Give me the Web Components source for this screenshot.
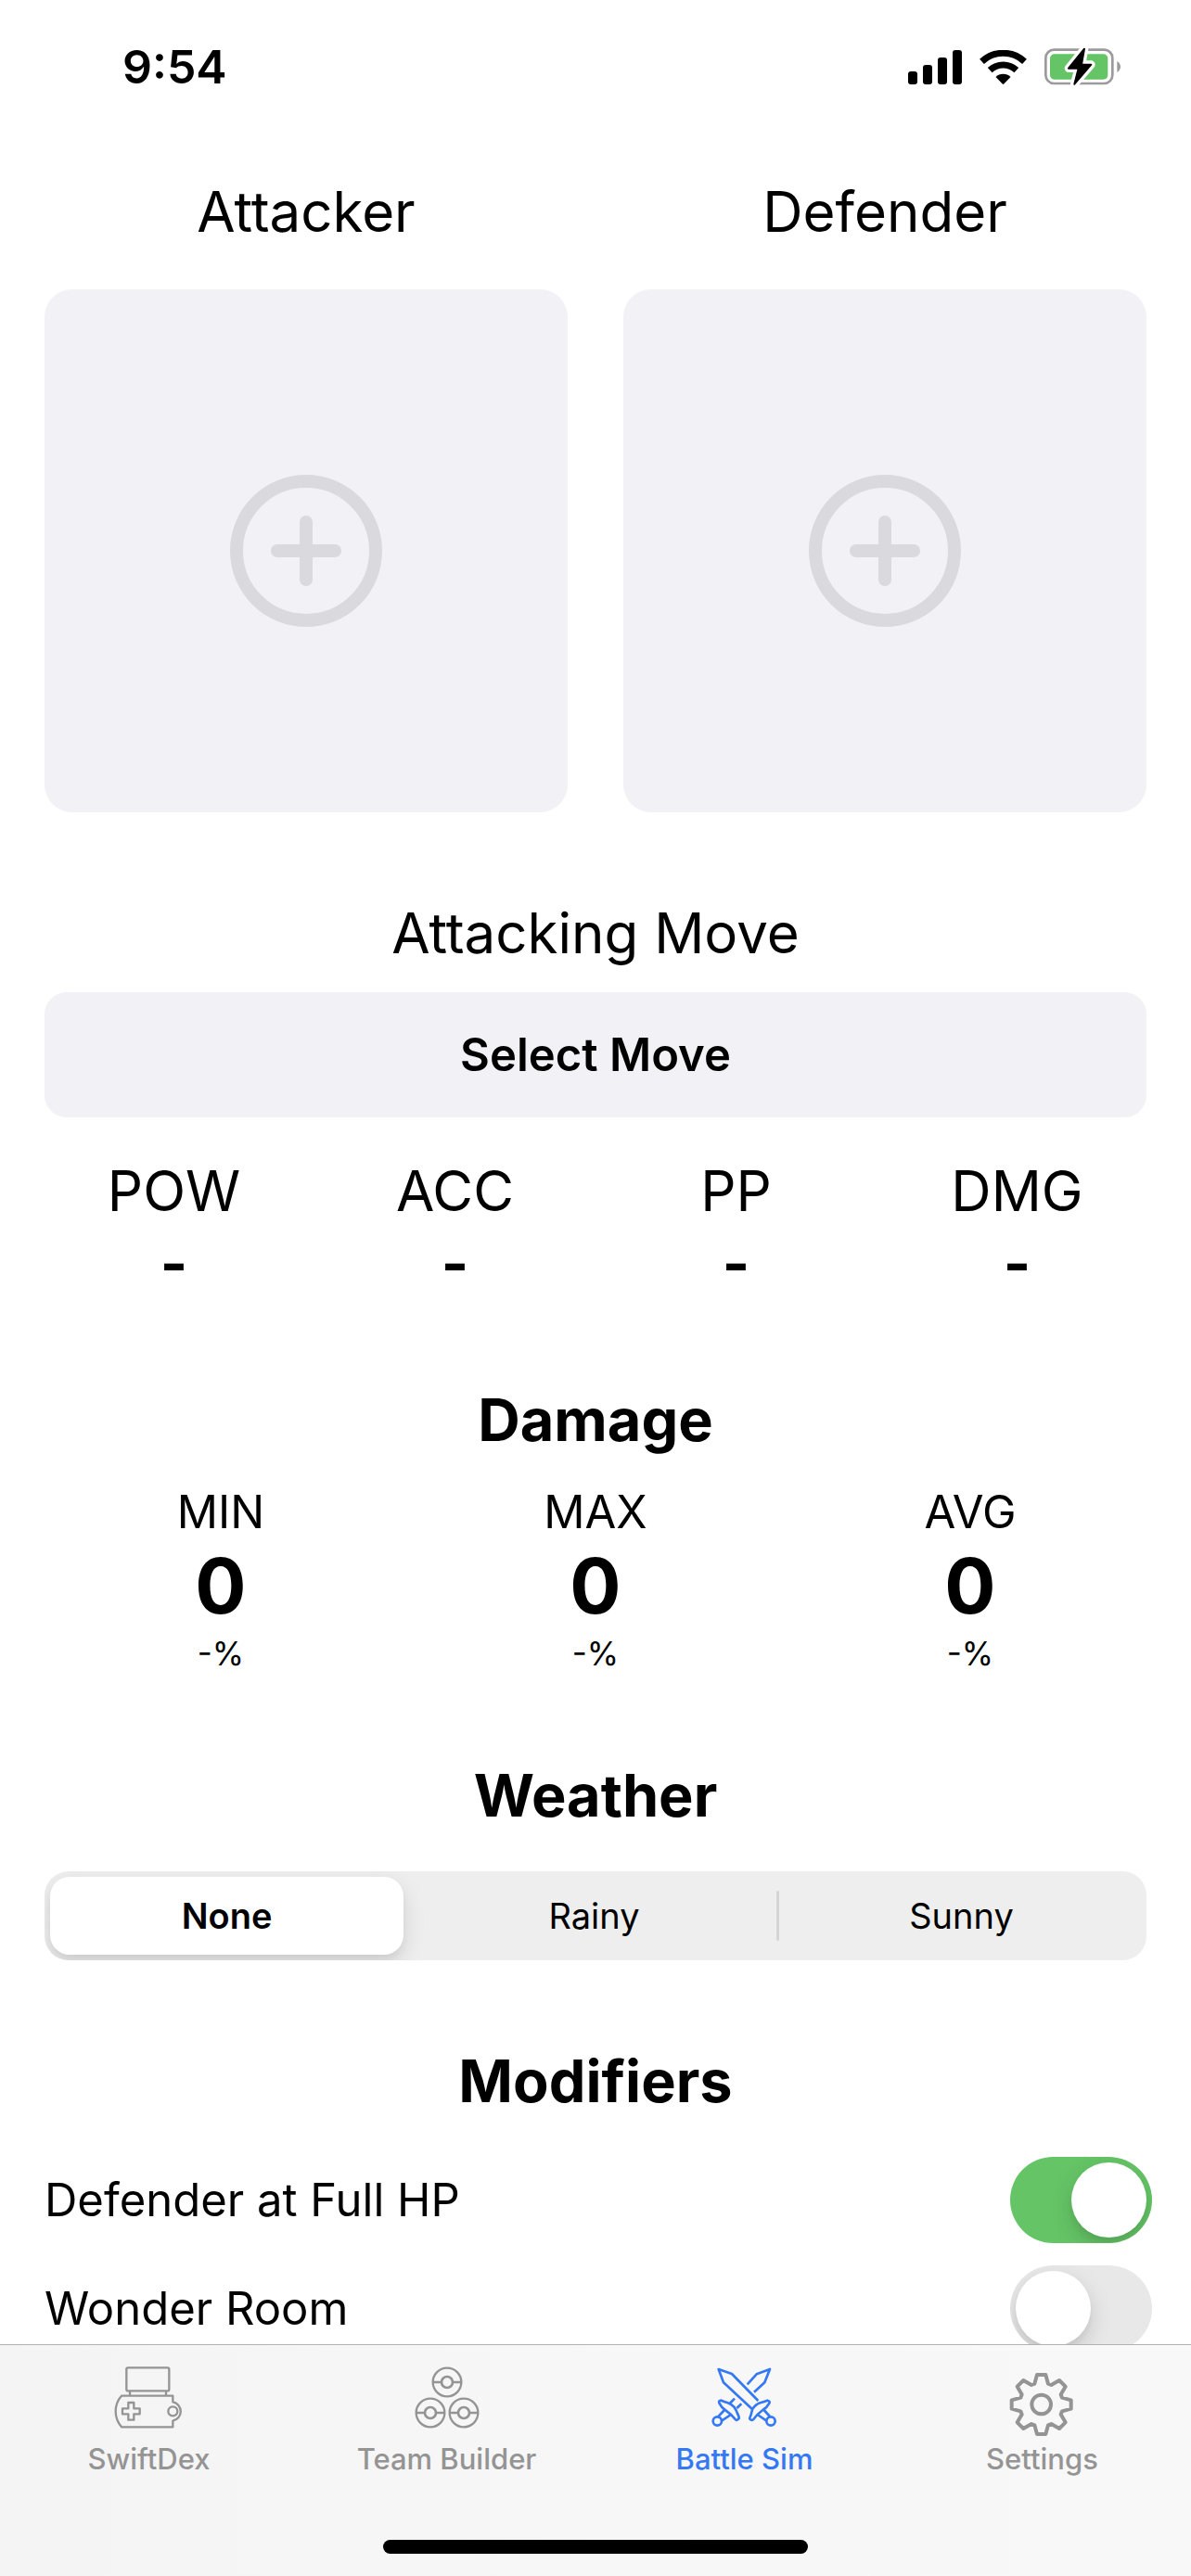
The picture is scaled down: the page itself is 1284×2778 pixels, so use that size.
<!DOCTYPE html>
<html lang="en">
<head>
    <meta charset="utf-8">
    <meta name="viewport" content="width=device-width, initial-scale=1">
    <title>Battle Sim</title>
    <style>
        body {
            margin: 0;
            color: #000;
            background: #fff;
            font-family: Inter, "Liberation Sans", sans-serif;
        }
        .pair {
            display: grid;
            grid-template-columns: 1fr 1fr;
            gap: 60px;
        }
    </style>
</head>
<body>
    <app-shell>
        <status-bar slot="status">9:54</status-bar>
        <battle-section wide>
            <div class="pair">
                <pokemon-slot name="Attacker"></pokemon-slot>
                <pokemon-slot name="Defender"></pokemon-slot>
            </div>
        </battle-section>
        <battle-section heading="Attacking Move" light>
            <move-picker>Select Move</move-picker>
            <stat-row>
                <move-stat label="POW">-</move-stat>
                <move-stat label="ACC">-</move-stat>
                <move-stat label="PP">-</move-stat>
                <move-stat label="DMG">-</move-stat>
            </stat-row>
        </battle-section>
        <battle-section heading="Damage">
            <stat-row>
                <damage-stat label="MIN" percent="-%">0</damage-stat>
                <damage-stat label="MAX" percent="-%">0</damage-stat>
                <damage-stat label="AVG" percent="-%">0</damage-stat>
            </stat-row>
        </battle-section>
        <battle-section heading="Weather" wide>
            <segmented-control name="weather" options="None,Rainy,Sunny" value="None"></segmented-control>
        </battle-section>
        <battle-section heading="Modifiers" wide>
            <toggle-row checked>Defender at Full HP</toggle-row>
            <toggle-row>Wonder Room</toggle-row>
        </battle-section>
        <tab-bar slot="tabs">
            <tab-item icon="console">SwiftDex</tab-item>
            <tab-item icon="team">Team Builder</tab-item>
            <tab-item icon="swords" active>Battle Sim</tab-item>
            <tab-item icon="gear">Settings</tab-item>
        </tab-bar>
    </app-shell>

    <script>
        class BaseElement extends HTMLElement {
            constructor() {
                super();
                this.attachShadow({ mode: "open" });
            }
            connectedCallback() {
                this.shadowRoot.innerHTML = this.shadowRootInnerHtml();
            }
        }

        class AppShell extends BaseElement {
            shadowRootInnerHtml() {
                return `<style>
                    :host {
                        display: flex;
                        flex-direction: column;
                        height: 100vh;
                    }
                    main {
                        flex: 1;
                        min-height: 0;
                        overflow: hidden auto;
                        scrollbar-width: none;
                        box-sizing: border-box;
                        padding: 44px 48px;
                        display: flex;
                        flex-direction: column;
                        gap: 90px;
                    }
                </style>
                <slot name="status"></slot>
                <main><slot></slot></main>
                <slot name="tabs"></slot>`;
            }
        }

        class StatusBar extends BaseElement {
            shadowRootInnerHtml() {
                return `<style>
                    :host {
                        display: flex;
                        flex: none;
                        align-items: center;
                        justify-content: space-between;
                        height: 144px;
                        padding: 0 76px 0 132px;
                        font-size: 50px;
                        font-weight: 600;
                    }
                    .icons {
                        display: flex;
                        align-items: center;
                        gap: 19px;
                    }
                    svg {
                        display: block;
                    }
                </style>
                <time><slot></slot></time>
                <div class="icons">
                    <svg width="58" height="37" viewBox="0 0 58 37" aria-label="Signal">
                        <rect x="0" y="23" width="10" height="14" rx="3"/>
                        <rect x="16" y="16" width="10" height="21" rx="3"/>
                        <rect x="32" y="8" width="10" height="29" rx="3"/>
                        <rect x="48" y="0" width="10" height="37" rx="3"/>
                    </svg>
                    <svg width="51" height="37" viewBox="349 72 152 111" aria-label="Wi-Fi">
                        <g fill="none" stroke="#000" stroke-width="21">
                            <path d="M356 109A101 101 0 0 1 494 109"/>
                            <path d="M382 137A63 63 0 0 1 468 137"/>
                        </g>
                        <path d="M401 159A34 34 0 0 1 449 159L428 181Q425 184 422 181Z"/>
                    </svg>
                    <svg width="82" height="42" viewBox="558 65 246 126" aria-label="Battery charging">
                        <rect x="562" y="73" width="216" height="109" rx="27" fill="none" stroke="#9b9b9b" stroke-width="8"/>
                        <rect x="576" y="87" width="187" height="82" rx="14" fill="#65c466"/>
                        <path d="M793 110Q804 117 804 128Q804 139 793 146Z" fill="#9b9b9b"/>
                        <path d="M687 70L636 133H668L655 184L709 121H678Z" fill="#fff" stroke="#fff" stroke-width="26" stroke-linejoin="round"/>
                        <path d="M687 70L636 133H668L655 184L709 121H678Z" stroke="#000" stroke-width="6" stroke-linejoin="round"/>
                    </svg>
                </div>`;
            }
        }

        class BattleSection extends BaseElement {
            shadowRootInnerHtml() {
                const heading = this.getAttribute("heading");
                return `<style>
                    :host {
                        display: flex;
                        flex: none;
                        flex-direction: column;
                        gap: 30px;
                    }
                    :host([wide]) {
                        gap: 42px;
                    }
                    :host([light]) {
                        gap: 24px;
                    }
                    h2 {
                        margin: 0;
                        font-size: 63px;
                        line-height: 80px;
                        font-weight: 700;
                        text-align: center;
                    }
                    :host([light]) h2 {
                        font-size: 60px;
                        font-weight: 400;
                    }
                    .content {
                        display: flex;
                        flex-direction: column;
                        gap: 24px;
                    }
                    :host([light]) .content {
                        gap: 40px;
                    }
                </style>
                ${heading ? `<h2>${heading}</h2>` : ""}
                <div class="content"><slot></slot></div>`;
            }
        }

        class PokemonSlot extends BaseElement {
            shadowRootInnerHtml() {
                const name = this.getAttribute("name");
                return `<style>
                    :host {
                        display: flex;
                        flex-direction: column;
                        gap: 44px;
                    }
                    h2 {
                        margin: 0;
                        font-size: 60px;
                        line-height: 80px;
                        font-weight: 400;
                        text-align: center;
                    }
                    button {
                        display: flex;
                        align-items: center;
                        justify-content: center;
                        width: 100%;
                        aspect-ratio: 1;
                        padding: 0;
                        border: 0;
                        border-radius: 30px;
                        background: #f1f1f6;
                    }
                </style>
                <h2 id="name">${name}</h2>
                <button type="button" aria-labelledby="name">
                    <svg width="164" height="164" viewBox="0 0 164 164" fill="none" stroke="#d9d9de" stroke-width="14" stroke-linecap="round">
                        <circle cx="82" cy="82" r="75"/>
                        <path d="M51 82H113M82 51V113"/>
                    </svg>
                </button>`;
            }
        }

        class MovePicker extends BaseElement {
            shadowRootInnerHtml() {
                return `<style>
                    :host {
                        display: block;
                    }
                    button {
                        width: 100%;
                        height: 135px;
                        border: 0;
                        border-radius: 24px;
                        background: #f1f1f6;
                        color: inherit;
                        font: 600 49px/60px Inter, "Liberation Sans", sans-serif;
                    }
                </style>
                <button type="button"><slot></slot></button>`;
            }
        }

        class StatRow extends BaseElement {
            shadowRootInnerHtml() {
                return `<style>
                    :host {
                        display: grid;
                        grid-auto-flow: column;
                        grid-auto-columns: 1fr;
                        gap: 24px;
                        text-align: center;
                    }
                </style>
                <slot></slot>`;
            }
        }

        class MoveStat extends BaseElement {
            shadowRootInnerHtml() {
                return `<style>
                    :host {
                        display: flex;
                        flex-direction: column;
                        font-size: 60px;
                        line-height: 78px;
                    }
                    .value {
                        font-size: 63px;
                        font-weight: 700;
                    }
                </style>
                <span>${this.getAttribute("label")}</span>
                <span class="value"><slot></slot></span>`;
            }
        }

        class DamageStat extends BaseElement {
            shadowRootInnerHtml() {
                return `<style>
                    :host {
                        display: flex;
                        flex-direction: column;
                        font-size: 49px;
                        line-height: 60px;
                    }
                    .value {
                        font-size: 82px;
                        line-height: 99px;
                        font-weight: 700;
                    }
                    .percent {
                        font-size: 35px;
                        line-height: 46px;
                    }
                </style>
                <span>${this.getAttribute("label")}</span>
                <span class="value"><slot></slot></span>
                <span class="percent">${this.getAttribute("percent")}</span>`;
            }
        }

        class SegmentedControl extends BaseElement {
            shadowRootInnerHtml() {
                const name = this.getAttribute("name");
                const value = this.getAttribute("value");
                const segments = this.getAttribute("options").split(",").map(option => `
                    <label>
                        <input type="radio" name="${name}" value="${option}" ${option === value ? "checked" : ""}>
                        <span>${option}</span>
                    </label>`).join("");
                return `<style>
                    :host {
                        display: grid;
                        grid-auto-flow: column;
                        grid-auto-columns: 1fr;
                        overflow: hidden;
                        border-radius: 26px;
                        background: #eee;
                        font-size: 38px;
                        line-height: 48px;
                    }
                    label {
                        display: flex;
                        align-items: center;
                        padding: 6px 0 6px 6px;
                    }
                    /* hairline between two unselected segments */
                    label::after {
                        content: "";
                        width: 3px;
                        height: 54px;
                        margin-left: 6px;
                        border-radius: 2px;
                        background: #d5d5d5;
                    }
                    label:has(:checked)::after, label:last-child::after {
                        background: none;
                    }
                    input {
                        appearance: none;
                        width: 0;
                        height: 0;
                        margin: 0;
                    }
                    span {
                        flex: 1;
                        padding: 18px 0;
                        border-radius: 21px;
                        text-align: center;
                    }
                    :checked + span {
                        background: #fff;
                        font-weight: 600;
                        box-shadow: 0 9px 24px rgba(0, 0, 0, .12), 0 6px 6px rgba(0, 0, 0, .04);
                    }
                </style>${segments}`;
            }
        }

        class ToggleRow extends BaseElement {
            shadowRootInnerHtml() {
                return `<style>
                    :host {
                        display: block;
                        margin-right: -6px;
                    }
                    label {
                        display: flex;
                        align-items: center;
                        justify-content: space-between;
                        font-size: 49px;
                        line-height: 60px;
                    }
                    input {
                        appearance: none;
                        display: flex;
                        box-sizing: border-box;
                        width: 153px;
                        height: 93px;
                        margin: 0;
                        padding: 6px;
                        overflow: hidden;
                        border-radius: 47px;
                        background: #e8e8e8;
                    }
                    input::before {
                        content: "";
                        width: 81px;
                        height: 81px;
                        border-radius: 50%;
                        background: #fff;
                        box-shadow: 0 9px 24px rgba(0, 0, 0, .15), 0 6px 6px rgba(0, 0, 0, .04);
                    }
                    input:checked {
                        justify-content: flex-end;
                        background: #65c466;
                    }
                </style>
                <label>
                    <slot></slot>
                    <input type="checkbox" role="switch" ${this.hasAttribute("checked") ? "checked" : ""}>
                </label>`;
            }
        }

        class TabBar extends BaseElement {
            shadowRootInnerHtml() {
                return `<style>
                    :host {
                        display: flex;
                        flex: none;
                        flex-direction: column;
                        align-items: center;
                        gap: 67px;
                        padding: 21px 0 24px;
                        border-top: 1px solid #b2b2b2;
                        background: linear-gradient(90deg, #f4f4f4, #f7f7f7 50%, #f8f8f8);
                    }
                    nav {
                        display: grid;
                        grid-auto-flow: column;
                        grid-auto-columns: 1fr;
                        width: 100%;
                    }
                    .home {
                        width: 458px;
                        height: 15px;
                        border-radius: 8px;
                        background: #000;
                    }
                </style>
                <nav><slot></slot></nav>
                <div class="home"></div>`;
            }
        }

        const icons = {
            console: `<svg viewBox="116 90 252 234" stroke-width="7">
                <rect x="168" y="100" width="138" height="75" rx="5"/>
                <path d="M179 175V190M296 175V190"/>
                <path d="M152 191H318V211A31 31 0 0 1 318 272V292H152Q133 270 133 241Q133 212 152 191Z"/>
                <path d="M174 213H192V232H211V250H192V269H174V250H155V232H174Z"/>
                <circle cx="318" cy="241" r="15"/>
            </svg>`,
            team: `<svg viewBox="1078 90 252 234" stroke-width="7">
                <circle cx="1204" cy="147" r="46"/>
                <circle cx="1150" cy="246" r="46"/>
                <circle cx="1258" cy="246" r="46"/>
                <g stroke-width="8">
                    <circle cx="1204" cy="147" r="18"/>
                    <circle cx="1150" cy="246" r="18"/>
                    <circle cx="1258" cy="246" r="18"/>
                </g>
                <path d="M1158 147H1184M1224 147H1250M1104 246H1130M1170 246H1196M1212 246H1238M1278 246H1304"/>
            </svg>`,
            swords: `<svg viewBox="121 90 252 234" stroke-width="8">
                <path d="M290 207L205 120L162 105L178 148L270 233"/>
                <path d="M320 206Q330 209 326 215Q319 229 305 237Q287 250 275 267Q270 273 263 266Q262 263 267 252Q270 240 272 233Q283 217 299 213Q310 210 320 206Z"/>
                <path d="M309 237L328 258M288 252L316 271"/>
                <circle cx="331" cy="273" r="14"/>
                <path d="M255 154L285 121L328 105L311 148L277 179"/>
                <path d="M171 206Q161 207 164 214Q171 229 185 238Q204 251 216 267Q221 273 228 264Q229 260 223 248Q219 236 212 227Q203 217 190 213Q180 210 171 206Z"/>
                <path d="M198 216L214 200M221 231L236 217M181 237L160 259M202 252L173 271"/>
                <circle cx="158" cy="273" r="14"/>
            </svg>`,
            gear: `<svg viewBox="-122 -129 252 234" stroke-width="12">
                <path d="M-22 -67L-14 -96H14L22 -67L32 -63L58 -78L78 -58L63 -32L67 -22L96 -14V14L67 22L63 32L78 58L58 78L32 63L22 67L14 96H-14L-22 67L-32 63L-58 78L-78 58L-63 32L-67 22L-96 14V-14L-67 -22L-63 -32L-78 -58L-58 -78L-32 -63Z"/>
                <circle r="31"/>
            </svg>`
        };

        class TabItem extends BaseElement {
            shadowRootInnerHtml() {
                return `<style>
                    :host {
                        display: block;
                        color: #949494;
                    }
                    :host([active]) {
                        color: #3478f6;
                    }
                    a {
                        display: flex;
                        flex-direction: column;
                        align-items: center;
                        gap: 4px;
                        color: inherit;
                        font-size: 31px;
                        line-height: 40px;
                        font-weight: 500;
                        text-decoration: none;
                    }
                    svg {
                        width: 84px;
                        height: 78px;
                        fill: none;
                        stroke: currentColor;
                        stroke-linejoin: round;
                    }
                </style>
                <a href="#" ${this.hasAttribute("active") ? 'aria-current="page"' : ""}>
                    ${icons[this.getAttribute("icon")]}
                    <slot></slot>
                </a>`;
            }
        }

        customElements.define("app-shell", AppShell);
        customElements.define("status-bar", StatusBar);
        customElements.define("battle-section", BattleSection);
        customElements.define("pokemon-slot", PokemonSlot);
        customElements.define("move-picker", MovePicker);
        customElements.define("stat-row", StatRow);
        customElements.define("move-stat", MoveStat);
        customElements.define("damage-stat", DamageStat);
        customElements.define("segmented-control", SegmentedControl);
        customElements.define("toggle-row", ToggleRow);
        customElements.define("tab-bar", TabBar);
        customElements.define("tab-item", TabItem);
    </script>
</body>
</html>
